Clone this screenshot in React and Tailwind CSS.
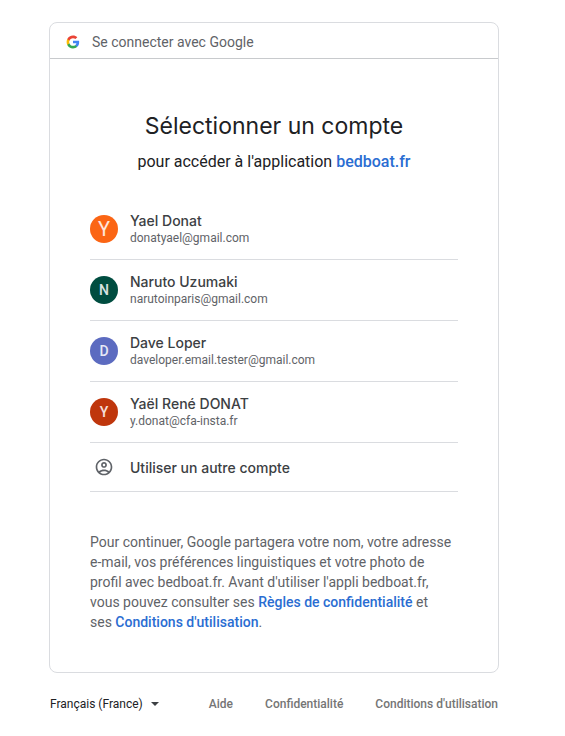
import React from "react";

const accounts = [
  { name: "Yael Donat", email: "donatyael@gmail.com", initial: "Y", avatar: "bg-[#fb6514] text-xl" },
  { name: "Naruto Uzumaki", email: "narutoinparis@gmail.com", initial: "N", avatar: "bg-[#004d40] text-sm font-medium" },
  { name: "Dave Loper", email: "daveloper.email.tester@gmail.com", initial: "D", avatar: "bg-[#5c6bc0] text-sm font-medium" },
  { name: "Yaël René DONAT", email: "y.donat@cfa-insta.fr", initial: "Y", avatar: "bg-[#bf360c] text-sm font-medium" },
];

function GoogleLogo() {
  return (
    <svg viewBox="0 0 48 48" className="size-[14px] shrink-0" aria-hidden="true">
      <path fill="#4285F4" d="M45.12 24.5c0-1.56-.14-3.06-.4-4.5H24v8.51h11.84c-.51 2.75-2.06 5.08-4.39 6.64v5.52h7.11c4.16-3.83 6.56-9.47 6.56-16.17z" />
      <path fill="#34A853" d="M24 46c5.94 0 10.92-1.97 14.56-5.33l-7.11-5.52c-1.97 1.32-4.49 2.1-7.45 2.1-5.73 0-10.58-3.87-12.31-9.07H4.34v5.7C7.96 41.07 15.4 46 24 46z" />
      <path fill="#FBBC05" d="M11.69 28.18C11.25 26.86 11 25.45 11 24s.25-2.86.69-4.18v-5.7H4.34C2.85 17.09 2 20.45 2 24s.85 6.91 2.34 9.88l7.35-5.7z" />
      <path fill="#EA4335" d="M24 10.75c3.23 0 6.13 1.11 8.41 3.29l6.31-6.31C34.91 4.18 29.93 2 24 2 15.4 2 7.96 6.93 4.34 14.12l7.35 5.7c1.73-5.2 6.58-9.07 12.31-9.07z" />
    </svg>
  );
}

function AccountIcon() {
  return (
    <svg viewBox="0 0 24 24" className="size-5" fill="#5f6368" aria-hidden="true">
      <path d="M12 2C6.48 2 2 6.48 2 12s4.48 10 10 10 10-4.48 10-10S17.52 2 12 2zM7.35 18.5C8.66 17.56 10.26 17 12 17s3.34.56 4.65 1.5C15.34 19.44 13.74 20 12 20s-3.34-.56-4.65-1.5zm10.79-1.38C16.45 15.8 14.32 15 12 15s-4.45.8-6.14 2.12C4.7 15.73 4 13.95 4 12c0-4.42 3.58-8 8-8s8 3.58 8 8c0 1.95-.7 3.73-1.86 5.12z" />
      <path d="M12 6c-1.93 0-3.5 1.57-3.5 3.5S10.07 13 12 13s3.5-1.57 3.5-3.5S13.93 6 12 6zm0 5c-.83 0-1.5-.67-1.5-1.5S11.17 8 12 8s1.5.67 1.5 1.5S12.83 11 12 11z" />
    </svg>
  );
}

export default function App() {
  return (
    <div className="min-h-screen bg-white pt-[22px] pr-[17px] font-['Roboto',sans-serif]">
      <div className="mx-auto w-full max-w-[450px]">
        <main className="rounded-lg border border-[#dadce0]">
          <header className="flex items-center gap-3 border-b border-[#c8cacd] px-4 pt-[9px] pb-1.5 text-sm text-[#5f6368]">
            <GoogleLogo />
            <span>Se connecter avec Google</span>
          </header>
          <div className="px-10 pt-[51px] pb-10">
            <div className="text-center text-[#202124]">
              <h1 className="font-['Inter',sans-serif] text-[23px] leading-8">Sélectionner un compte</h1>
              <p className="mt-2 text-base">
                pour accéder à l'application{" "}
                <a href="#app" className="font-medium text-[#2a6dd2]">bedboat.fr</a>
              </p>
            </div>
            <ul className="mt-[25px]">
              {accounts.map((account) => (
                <li key={account.email} className="border-b border-[#dadce0]">
                  <button type="button" className="flex h-[60px] w-full items-center gap-3 text-left">
                    <span className={"flex size-7 shrink-0 items-center justify-center rounded-full text-white/85 " + account.avatar}>
                      {account.initial}
                    </span>
                    <span className="block">
                      <span className="block font-['Inter',sans-serif] text-sm leading-[19px] font-medium text-[#3c4043]">{account.name}</span>
                      <span className="block text-xs leading-[17px] text-[#5f6368]">{account.email}</span>
                    </span>
                  </button>
                </li>
              ))}
              <li className="border-b border-[#dadce0]">
                <button type="button" className="flex h-12 w-full items-center gap-3 text-left">
                  <span className="flex w-7 shrink-0 justify-center">
                    <AccountIcon />
                  </span>
                  <span className="font-['Inter',sans-serif] text-sm leading-[19px] font-medium text-[#3c4043]">Utiliser un autre compte</span>
                </button>
              </li>
            </ul>
            <p className="mt-10 text-sm text-[#5f6368]">
              Pour continuer, Google partagera votre nom, votre adresse e-mail, vos préférences linguistiques et votre photo de profil avec bedboat.fr. Avant d'utiliser l'appli bedboat.fr, vous pouvez consulter ses{" "}
              <a href="#privacy" className="font-medium text-[#2a6dd2]">Règles de confidentialité</a> et
              <br />
              ses{" "}
              <a href="#terms" className="font-medium text-[#2a6dd2]">Conditions d'utilisation</a>.
            </p>
          </div>
        </main>
        <footer className="mt-[23px] flex items-center justify-between px-px text-xs">
          <div className="flex items-center gap-2">
            <select aria-label="Langue" className="appearance-none bg-transparent text-[#202124]">
              <option>Français (France)</option>
            </select>
            <svg viewBox="0 0 8 4" className="h-1 w-2" fill="#3c4043" aria-hidden="true">
              <path d="M0 0h8L4 4z" />
            </svg>
          </div>
          <nav className="flex gap-8 font-medium text-[#757575]">
            <a href="#help">Aide</a>
            <a href="#confidentiality">Confidentialité</a>
            <a href="#conditions">Conditions d'utilisation</a>
          </nav>
        </footer>
      </div>
    </div>
  );
}
